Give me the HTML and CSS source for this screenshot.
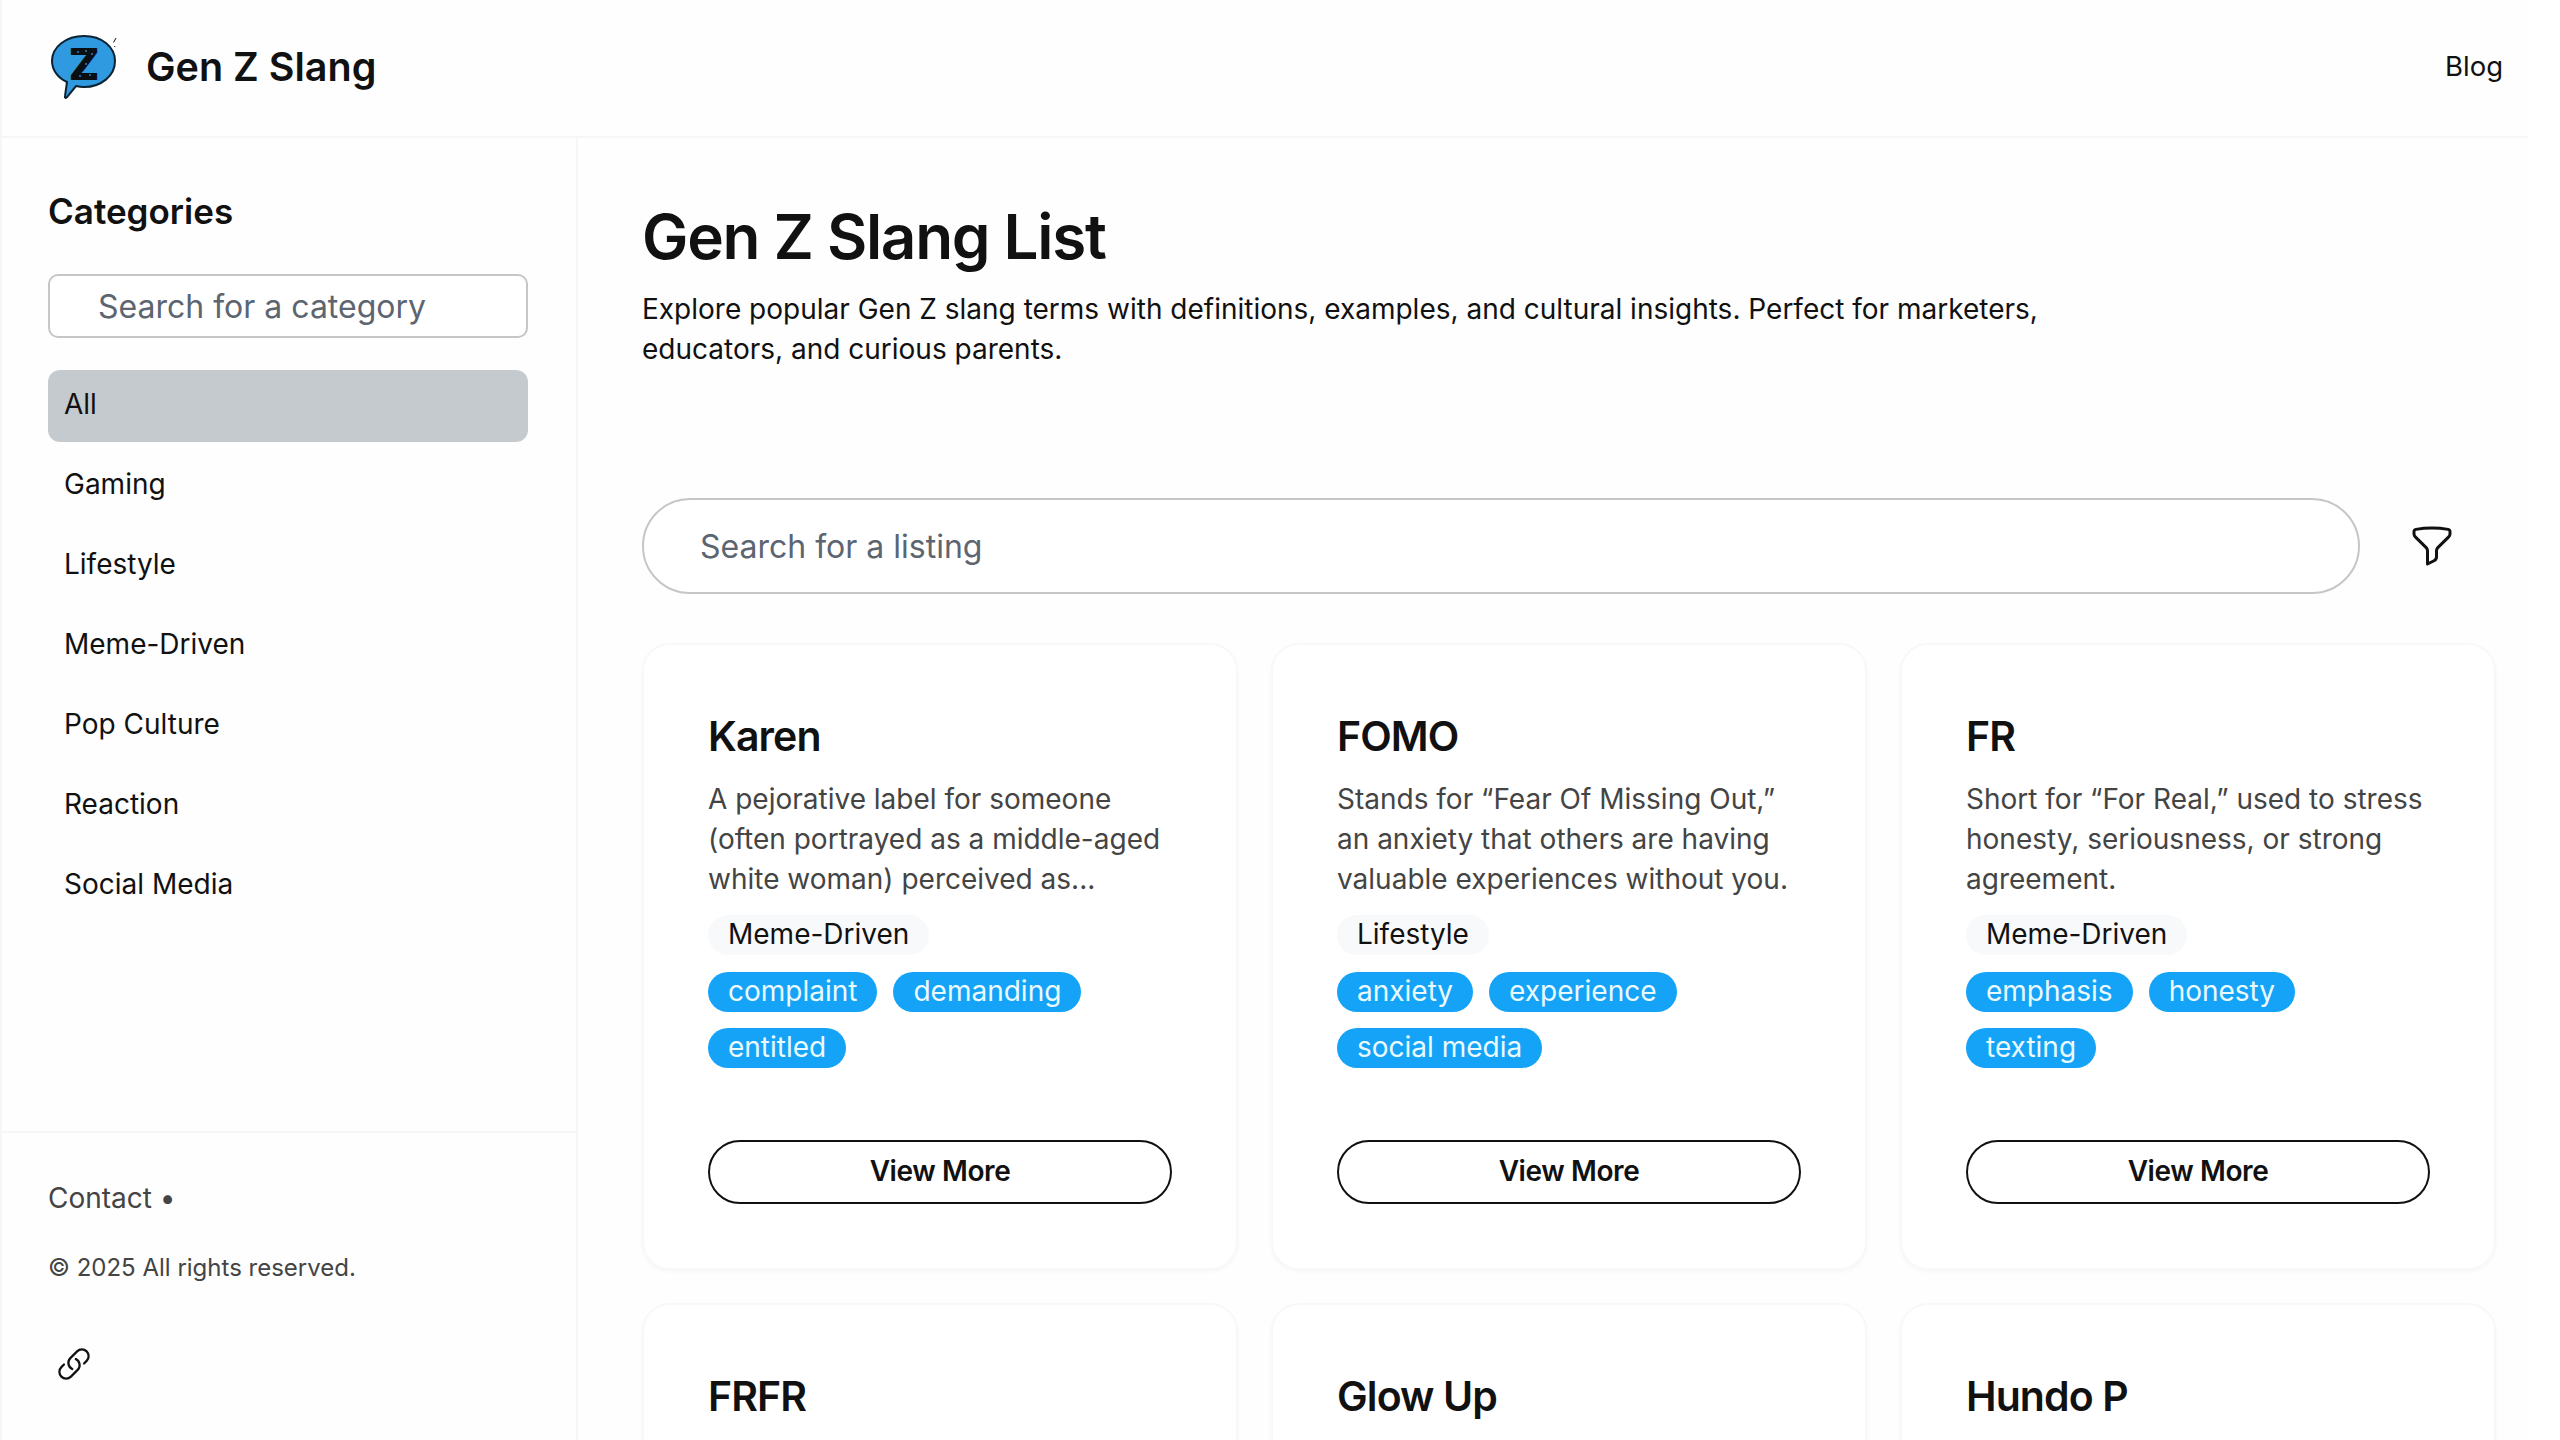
FILE: index.html
```html
<!DOCTYPE html>
<html lang="en">
<head>
  <meta charset="UTF-8">
  <meta name="viewport" content="width=device-width, initial-scale=1.0">
  <title>Gen Z Slang List</title>
  <link rel="stylesheet" href="styles.css">
</head>
<body>

<div class="page">
  <header class="topbar">
    <a class="brand" href="#">
      <svg class="brand-logo" viewBox="0 0 69 69" aria-hidden="true">
        <path class="bubble" d="M34 3C52 3 65 14 65 28C65 43 51 54 34 54C31 54 28 53.500 26 53L17 64C16 65.500 14.500 65 15 63L17 49C8 45 2 37 2 28C2 14 16 3 34 3Z"/>
        <text class="bubble-z" x="34" y="47" text-anchor="middle">Z</text>
        <circle class="speck" cx="28" cy="19" r="1"/>
        <circle class="speck" cx="36" cy="18" r="1"/>
        <circle class="speck" cx="42" cy="21" r="1"/>
        <circle class="speck" cx="36" cy="31" r="1"/>
        <circle class="speck" cx="40" cy="42" r="1"/>
        <circle class="speck" cx="30" cy="43" r="1"/>
        <path class="spark" d="M66 5L63.500 9.500M65 13L64.500 14"/>
      </svg>
      <span class="brand-name">Gen Z Slang</span>
    </a>
    <a class="nav-link" href="#">Blog</a>
  </header>

  <div class="layout">
    <aside class="sidebar">
      <div class="sidebar-top">
        <h2>Categories</h2>
        <input class="category-search" type="text" placeholder="Search for a category">
        <ul class="category-list">
          <li class="active">All</li>
          <li>Gaming</li>
          <li>Lifestyle</li>
          <li>Meme-Driven</li>
          <li>Pop Culture</li>
          <li>Reaction</li>
          <li>Social Media</li>
        </ul>
      </div>
      <div class="sidebar-footer">
        <p class="contact">Contact <span class="dot">&bull;</span></p>
        <p class="copyright">&copy; 2025 All rights reserved.</p>
        <svg class="link-icon" viewBox="0 0 24 24" aria-hidden="true">
          <path d="M13.19 8.688a4.5 4.5 0 0 1 1.242 7.244l-4.5 4.5a4.5 4.5 0 0 1-6.364-6.364l1.757-1.757m13.35-.622 1.757-1.757a4.5 4.5 0 0 0-6.364-6.364l-4.5 4.5a4.5 4.5 0 0 0 1.242 7.244"/>
        </svg>
      </div>
    </aside>

    <main class="main-content">
      <h1>Gen Z Slang List</h1>
      <p class="intro">Explore popular Gen Z slang terms with definitions, examples, and cultural insights. Perfect for marketers, educators, and curious parents.</p>

      <div class="search-row">
        <input class="listing-search" type="text" placeholder="Search for a listing">
        <svg class="filter-icon" viewBox="0 0 24 24" aria-hidden="true">
          <path d="M12 3c2.755 0 5.455.232 8.083.678.533.09.917.556.917 1.096v1.044a2.25 2.25 0 0 1-.659 1.591l-5.432 5.432a2.25 2.25 0 0 0-.659 1.591v2.927a2.25 2.25 0 0 1-1.244 2.013L9.75 21v-6.568a2.25 2.25 0 0 0-.659-1.591L3.659 7.409A2.25 2.25 0 0 1 3 5.818V4.774c0-.54.384-1.006.917-1.096A48.32 48.32 0 0 1 12 3Z"/>
        </svg>
      </div>

      <div class="card-grid">
        <div class="card">
          <h3>Karen</h3>
          <p class="definition">A pejorative label for someone (often portrayed as a middle-aged white woman) perceived as...</p>
          <span class="category-chip">Meme-Driven</span>
          <div class="tags">
            <span class="tag">complaint</span>
            <span class="tag">demanding</span>
            <span class="tag">entitled</span>
          </div>
          <a class="view-more" href="#">View More</a>
        </div>
        <div class="card">
          <h3>FOMO</h3>
          <p class="definition">Stands for &ldquo;Fear Of Missing Out,&rdquo; an anxiety that others are having valuable experiences without you.</p>
          <span class="category-chip">Lifestyle</span>
          <div class="tags">
            <span class="tag">anxiety</span>
            <span class="tag">experience</span>
            <span class="tag">social media</span>
          </div>
          <a class="view-more" href="#">View More</a>
        </div>
        <div class="card">
          <h3>FR</h3>
          <p class="definition">Short for &ldquo;For Real,&rdquo; used to stress honesty, seriousness, or strong agreement.</p>
          <span class="category-chip">Meme-Driven</span>
          <div class="tags">
            <span class="tag">emphasis</span>
            <span class="tag">honesty</span>
            <span class="tag">texting</span>
          </div>
          <a class="view-more" href="#">View More</a>
        </div>
        <div class="card"><h3>FRFR</h3></div>
        <div class="card"><h3>Glow Up</h3></div>
        <div class="card"><h3>Hundo P</h3></div>
      </div>
    </main>
  </div>
</div>

</body>
</html>
```

FILE: styles.css
```css
* {
  margin: 0;
  padding: 0;
  box-sizing: border-box;
}

html, body {
  height: 100%;
  overflow: hidden;
}

body {
  font-family: Inter, "Liberation Sans", sans-serif;
  font-size: 28px;
  line-height: 40px;
  color: #111;
  background-color: #fff;
}

a {
  color: inherit;
  text-decoration: none;
}

.page {
  width: 2528px;
  height: 1440px;
  display: flex;
  flex-direction: column;
  background-color: #fefefe;
  border-left: 2px solid #f7f7f7;
}

/* Top bar */
.topbar {
  height: 138px;
  flex-shrink: 0;
  display: flex;
  justify-content: space-between;
  align-items: center;
  padding: 0 25px 2px 48px;
  border-bottom: 2px solid #f6f6f6;
}

.brand {
  display: flex;
  align-items: center;
  gap: 27px;
}

.brand-logo {
  width: 69px;
  height: 69px;
  display: block;
}

.bubble {
  fill: #2f9ae0;
  stroke: #0c2233;
  stroke-width: 2;
}

.bubble-z {
  font-family: Inter, sans-serif;
  font-size: 44px;
  font-weight: 900;
  fill: #0a0f14;
}

.speck {
  fill: #2f7fb8;
}

.spark {
  fill: none;
  stroke: #111;
  stroke-width: 1;
}

.brand-name {
  font-size: 39.5px;
  font-weight: 600;
  line-height: 48px;
}

.nav-link {
  font-size: 27.5px;
  margin-bottom: 2px;
}

/* Sidebar */
.layout {
  flex: 1;
  display: flex;
  min-height: 0;
}

.sidebar {
  width: 576px;
  flex-shrink: 0;
  display: flex;
  flex-direction: column;
  justify-content: space-between;
  border-right: 2px solid #f6f6f6;
}

.sidebar-top {
  padding: 49px 48px 0 46px;
}

.sidebar h2 {
  font-size: 35px;
  font-weight: 600;
  line-height: 48px;
  margin-bottom: 39px;
}

.category-search {
  display: block;
  width: 100%;
  height: 64px;
  padding: 0 20px 0 48px;
  font-family: inherit;
  font-size: 32px;
  color: #111;
  background-color: #fff;
  border: 2.5px solid #c6c6c6;
  border-radius: 10px;
  margin-bottom: 32px;
  outline: none;
}

input::placeholder {
  color: #5c6570;
  opacity: 1;
}

.category-list {
  list-style: none;
}

.category-list li {
  height: 72px;
  line-height: 69px;
  padding: 0 16px;
  margin-bottom: 8px;
  border-radius: 12px;
}

.category-list .active {
  background-color: #c5cacf;
}

.sidebar-footer {
  height: 309px;
  padding: 45px 48px 0 46px;
  border-top: 2px solid #f6f6f6;
  color: #444;
}

.copyright {
  font-size: 24px;
  margin-top: 30px;
}

.link-icon {
  display: block;
  width: 36px;
  height: 36px;
  margin: 58px 0 0 8px;
  fill: none;
  stroke: #111;
  stroke-width: 1.5;
  stroke-linecap: round;
  stroke-linejoin: round;
}

/* Main column */
.main-content {
  flex: 1;
  min-width: 0;
  padding: 62px 32px 0 64px;
}

h1 {
  font-size: 62px;
  font-weight: 600;
  line-height: 74px;
  letter-spacing: -1.3px;
  margin-bottom: 15px;
}

.intro {
  max-width: 1440px;
  margin-bottom: 129px;
}

.search-row {
  display: flex;
  align-items: center;
  margin-bottom: 49px;
}

.listing-search {
  width: 1718px;
  height: 96px;
  padding: 0 56px;
  font-family: inherit;
  font-size: 32px;
  background-color: #fff;
  border: 2.5px solid #c6c6c6;
  border-radius: 48px;
  outline: none;
}

.filter-icon {
  width: 48px;
  height: 48px;
  margin-left: 48px;
  fill: none;
  stroke: #111;
  stroke-width: 1.5;
  stroke-linecap: round;
  stroke-linejoin: round;
}

/* Listing cards */
.card-grid {
  display: grid;
  grid-template-columns: repeat(3, 596px);
  grid-auto-rows: 627px;
  gap: 33px;
}

.card {
  display: flex;
  flex-direction: column;
  align-items: flex-start;
  padding: 62px 64px 64px;
  background-color: #fff;
  border: 2px solid #f8f8f8;
  border-radius: 28px;
  box-shadow: 0 2px 4px rgba(0, 0, 0, 0.03);
}

.card h3 {
  font-size: 41px;
  font-weight: 600;
  line-height: 58px;
  letter-spacing: -0.9px;
  margin-bottom: 13.5px;
}

.definition {
  color: #444;
  margin-bottom: 16px;
}

.category-chip {
  height: 40px;
  line-height: 38px;
  padding: 0 20px;
  background-color: #f8f9fa;
  border-radius: 20px;
  margin-bottom: 17px;
}

.tags {
  display: flex;
  flex-wrap: wrap;
  gap: 16px;
}

.tag {
  height: 40px;
  line-height: 38px;
  padding: 0 20px;
  color: #eafaff;
  background-color: #14a3f7;
  border-radius: 20px;
}

.view-more {
  width: 100%;
  height: 64px;
  margin-top: auto;
  line-height: 58px;
  text-align: center;
  font-weight: 600;
  letter-spacing: -0.4px;
  border: 2.5px solid #111;
  border-radius: 32px;
}
```
